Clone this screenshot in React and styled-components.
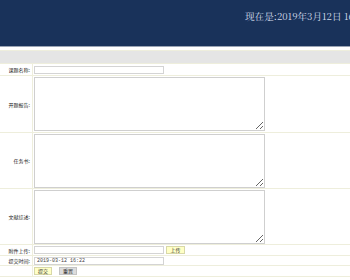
import React from "react";
import styled, { createGlobalStyle } from "styled-components";

const Global = createGlobalStyle`
  html, body { margin: 0; padding: 0; background: #ffffff; overflow: hidden; }
  body { font-family: "Noto Sans CJK SC", "Noto Sans", sans-serif; }
`;

const Header = styled.header`
  height: 46px;
  background: #19325a;
  border-bottom: 1px solid #9aa4b4;
  padding-left: 245px;
  box-sizing: content-box;
  overflow: hidden;
`;

const Clock = styled.div`
  padding-top: 10px;
  white-space: nowrap;
  color: #d4dcea;
  font-family: "Noto Serif CJK SC", "Noto Sans CJK SC", "Liberation Serif", serif;
  font-size: 9.6px;
  line-height: 12px;
`;

const Gap = styled.div`
  height: 3px;
  background: #ffffff;
  border-bottom: 1px solid #eeeedc;
`;

const TitleBar = styled.div`
  height: 12px;
  background: #e5e5e5;
  border-bottom: 1px solid #eeeedc;
`;

const Form = styled.form`
  display: flex;
  flex-direction: column;
  margin: 0;
`;

const Row = styled.div`
  display: grid;
  grid-template-columns: 33px 1fr;
  height: ${(p) => p.$h}px;
  border-bottom: 1px solid #eeeedc;
  box-sizing: border-box;
`;

const Label = styled.div`
  border-right: 1px solid #eeeedc;
  display: flex;
  align-items: center;
  justify-content: flex-end;
  padding-right: 2px;
  font-size: 5px;
  color: #222;
  white-space: nowrap;
`;

const Cell = styled.div`
  display: flex;
  align-items: center;
  gap: 2px;
  padding-left: 1px;
`;

const TextInput = styled.input`
  width: 130px;
  height: 8px;
  box-sizing: border-box;
  border: 1px solid #d4d4d4;
  padding: 0 2px;
  margin: 0;
  font-size: 5px;
  font-family: "Liberation Mono", monospace;
  color: #444;
  background: #fff;
  outline: none;
`;

const Area = styled.textarea`
  width: 231px;
  height: 54px;
  box-sizing: border-box;
  border: 1px solid #cfcfcf;
  margin: 0;
  padding: 0;
  background: #fff;
  outline: none;
`;

const Btn = styled.button`
  height: 8px;
  box-sizing: border-box;
  padding: 0 3px;
  margin: 0;
  font-size: 5px;
  line-height: 6px;
  font-family: "Noto Sans CJK SC", sans-serif;
  color: #333;
  border: 1px solid ${(p) => (p.$gray ? "#c4c4c4" : "#d8d8a8")};
  background: ${(p) => (p.$gray ? "#dcdcdc" : "#ffffc6")};
  min-width: ${(p) => p.$w || 17}px;
`;

const ButtonRow = styled.div`
  display: flex;
  align-items: center;
  gap: 7px;
  padding-left: 1px;
`;

export default function App() {
  return (
    <>
      <Global />
      <Header>
        <Clock>现在是:2019年3月12日 16:22:35 星期二</Clock>
      </Header>
      <Gap />
      <TitleBar />
      <Form>
        <Row $h={12}>
          <Label>课题名称:</Label>
          <Cell><TextInput /></Cell>
        </Row>
        <Row $h={57}>
          <Label>开题报告:</Label>
          <Cell><Area /></Cell>
        </Row>
        <Row $h={56}>
          <Label>任务书:</Label>
          <Cell><Area /></Cell>
        </Row>
        <Row $h={56}>
          <Label>文献综述:</Label>
          <Cell><Area /></Cell>
        </Row>
        <Row $h={11}>
          <Label>附件上传:</Label>
          <Cell>
            <TextInput />
            <Btn type="button" $w={19}>上传</Btn>
          </Cell>
        </Row>
        <Row $h={10}>
          <Label>提交时间:</Label>
          <Cell><TextInput defaultValue="2019-03-12 16:22" /></Cell>
        </Row>
        <Row $h={11}>
          <Label />
          <ButtonRow>
            <Btn type="button" $w={18}>提交</Btn>
            <Btn type="button" $gray $w={18}>重置</Btn>
          </ButtonRow>
        </Row>
      </Form>
    </>
  );
}
